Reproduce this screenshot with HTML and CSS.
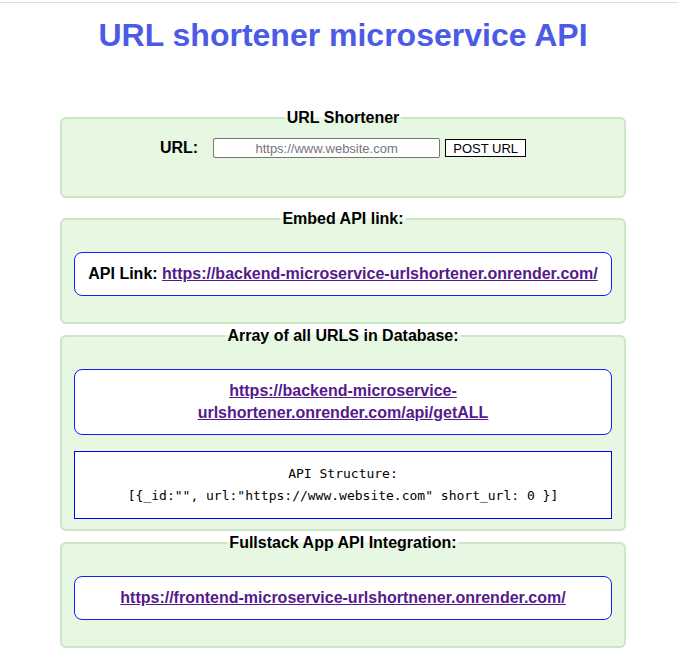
FILE: index.html
```html
<!DOCTYPE html>
<html>
<head>
  <meta charset="UTF-8">
  <title>URL shortener microservice API</title>
  <link rel="stylesheet" href="styles.css">
</head>
<body>

  <div class="linia"></div>

  <div class="strona">
    <h1>URL shortener microservice API</h1>

    <fieldset class="pierwszy">
      <legend>URL Shortener</legend>
      <form class="formularz" action="/api/shorturl" method="POST">
        <label for="url">URL:</label>
        <input id="url" type="text" name="url" placeholder="https://www.website.com">
        <button type="submit">POST URL</button>
      </form>
    </fieldset>

    <fieldset>
      <legend>Embed API link:</legend>
      <div class="ramka">
        API Link: <a href="https://backend-microservice-urlshortener.onrender.com/">https://backend-microservice-urlshortener.onrender.com/</a>
      </div>
    </fieldset>

    <fieldset>
      <legend>Array of all URLS in Database:</legend>
      <div class="ramka">
        <a href="https://backend-microservice-urlshortener.onrender.com/api/getALL">https://backend-microservice-urlshortener.onrender.com/api/getALL</a>
      </div>
      <div class="struktura">
        <div>API Structure:</div>
        <div>[{_id:"", url:"https://www.website.com" short_url: 0 }]</div>
      </div>
    </fieldset>

    <fieldset>
      <legend>Fullstack App API Integration:</legend>
      <div class="ramka">
        <a href="https://frontend-microservice-urlshortnener.onrender.com/">https://frontend-microservice-urlshortnener.onrender.com/</a>
      </div>
    </fieldset>
  </div>

</body>
</html>
```

FILE: styles.css
```css
body {
  margin: 0;
  font-family: "Liberation Sans", Arial, sans-serif;
  color: black;
  background-color: white;
}

.linia {
  margin-top: 2px;
  border-top: 1px solid #dddddd;
}

.strona {
  width: 566px;
  margin-left: 60px;
}

h1 {
  margin: 14px 0 0;
  font-size: 32px;
  line-height: 37px;
  text-align: center;
  color: #4b5be6;
}

fieldset {
  margin: 3px 0 0;
  padding: 8px 12px 10px;
  border: 2px solid #cde6c8;
  border-radius: 6px;
  background-color: #e6f7e2;
  text-align: center;
}

fieldset.pierwszy {
  margin-top: 55px;
}

fieldset.pierwszy + fieldset {
  margin-top: 12px;
}

legend {
  padding: 0 2px;
  font-size: 16px;
  line-height: 18px;
  font-weight: bold;
}

.formularz {
  display: flex;
  justify-content: center;
  align-items: center;
  margin: 0;
  padding: 3px 0 28px;
}

.formularz label {
  font-size: 16px;
  font-weight: bold;
  margin-right: 15px;
}

.formularz input {
  box-sizing: border-box;
  width: 227px;
  height: 20px;
  padding: 0 4px;
  border: 1px solid #767676;
  border-radius: 2px;
  font-family: "Liberation Sans", Arial, sans-serif;
  font-size: 13px;
  text-align: center;
}

.formularz input::placeholder {
  color: #757575;
}

.formularz button {
  box-sizing: border-box;
  width: 81px;
  height: 18px;
  margin-left: 5px;
  padding: 0;
  border: 1px solid black;
  border-radius: 0;
  background-color: white;
  font-family: "Liberation Sans", Arial, sans-serif;
  font-size: 13px;
  color: black;
}

.ramka {
  margin: 16px 0;
  padding: 10px 12px;
  border: 1px solid #1a1aff;
  border-radius: 8px;
  background-color: white;
  font-size: 16px;
  line-height: 22px;
  font-weight: bold;
}

.ramka a {
  color: #551a8b;
}

.struktura {
  margin: 0;
  padding: 11px 12px;
  border: 1px solid #0000ff;
  background-color: white;
  font-family: "DejaVu Sans Mono", monospace;
  font-size: 13px;
  line-height: 22px;
}
```
